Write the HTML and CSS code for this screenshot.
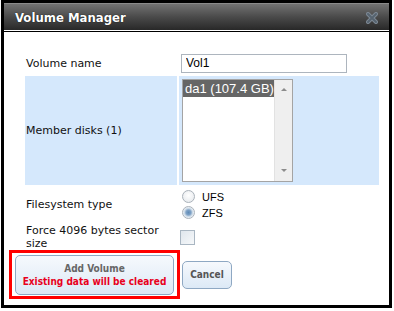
FILE: index.html
```html
<!DOCTYPE html>
<html lang="en">
<head>
    <meta charset="UTF-8">
    <meta name="viewport" content="width=device-width, initial-scale=1.0">
    <title>Volume Manager</title>
    <link rel="stylesheet" href="styles.css">
</head>
<body>

<div class="dialog">
    <div class="titlebar">
        <span class="title">Volume Manager</span>
        <svg class="close" width="12" height="12" viewBox="0 0 12 12">
            <path d="M2 2 L10 10 M10 2 L2 10" stroke="#7d8894" stroke-width="4" stroke-linecap="round"/>
            <path d="M2 2 L10 10 M10 2 L2 10" stroke="#56636f" stroke-width="2" stroke-linecap="round"/>
        </svg>
    </div>

    <div class="content">
        <div class="form-grid">
            <div class="label">Volume name</div>
            <div class="field">
                <input class="textbox" type="text" value="Vol1">
            </div>

            <div class="label hl">Member disks (1)</div>
            <div class="field hl top">
                <div class="listbox">
                    <div class="options">
                        <div class="option selected">da1 (107.4 GB)</div>
                    </div>
                    <div class="scrollbar">
                        <span class="arrow up"></span>
                        <span class="arrow down"></span>
                    </div>
                </div>
            </div>

            <div class="label">Filesystem type</div>
            <div class="field radios">
                <div class="radio-row"><span class="radio"></span>UFS</div>
                <div class="radio-row"><span class="radio checked"></span>ZFS</div>
            </div>

            <div class="label wrap">Force 4096 bytes sector size</div>
            <div class="field">
                <span class="checkbox"></span>
            </div>
        </div>

        <div class="actions">
            <div class="highlight">
                <button class="btn btn-add">Add Volume<span class="warn">Existing data will be cleared</span></button>
            </div>
            <button class="btn btn-cancel">Cancel</button>
        </div>
    </div>
</div>

</body>
</html>
```

FILE: styles.css
```css
body {
    margin: 0;
    padding: 0;
    background-color: #fff;
    font-family: "DejaVu Sans", Verdana, sans-serif;
}

.dialog {
    width: 385px;
    height: 302px;
    margin-left: 1px;
    border: 3px solid #000;
    background-color: #fff;
}

.titlebar {
    height: 26px;
    display: flex;
    align-items: center;
    justify-content: space-between;
    padding: 0 11px 0 11px;
    background: linear-gradient(#727272, #4a4a4a 50%, #282828);
    border-top: 1px solid #8a8a8a;
    border-bottom: 1px solid #fff;
}

.title {
    color: #fff;
    font-family: "DejaVu Sans Condensed", "DejaVu Sans", sans-serif;
    font-weight: bold;
    font-size: 13px;
    text-shadow: 0 0 1px #000;
    padding-top: 1px;
}

.close {
    display: block;
    margin-top: 1px;
}

.content {
    border-top: 1px solid #000;
    padding-top: 20px;
}

.form-grid {
    display: grid;
    grid-template-columns: 152px 200px;
    grid-template-rows: 22px 109px 35px 26px;
    gap: 2px;
    margin-left: 21px;
}

.label {
    display: flex;
    align-items: center;
    padding-left: 1px;
    font-size: 11px;
    color: #111;
}

.label.wrap {
    line-height: 13px;
}

.field {
    display: flex;
    align-items: center;
    padding-left: 1px;
}

.field.top {
    align-items: flex-start;
    padding: 3px 0 0 3px;
}

.hl {
    background-color: #d5e8fc;
}

.textbox {
    width: 166px;
    height: 19px;
    box-sizing: border-box;
    margin: 0 0 0 1px;
    padding: 0 4px;
    border: 1px solid #adb5be;
    font-family: "Liberation Sans", Arial, sans-serif;
    font-size: 12px;
    color: #000;
    outline: none;
}

.listbox {
    width: 111px;
    height: 103px;
    box-sizing: border-box;
    border: 1px solid #a4a4a4;
    background-color: #fff;
    display: flex;
}

.options {
    flex: 1;
}

.option {
    height: 17px;
    line-height: 17px;
    padding-left: 2px;
    font-family: "Liberation Sans", Arial, sans-serif;
    font-size: 13px;
    white-space: nowrap;
}

.option.selected {
    background-color: #666;
    color: #fff;
}

.scrollbar {
    width: 17px;
    background-color: #efefef;
    border-left: 1px solid #e2e2e2;
    display: flex;
    flex-direction: column;
    justify-content: space-between;
    align-items: center;
    padding: 8px 0 9px;
}

.arrow {
    width: 0;
    height: 0;
    border-left: 3px solid transparent;
    border-right: 3px solid transparent;
}

.arrow.up {
    border-bottom: 3px solid #8c8c8c;
}

.arrow.down {
    border-top: 3px solid #8c8c8c;
}

.radios {
    flex-direction: column;
    align-items: flex-start;
    justify-content: center;
    padding-left: 3px;
}

.radio-row {
    display: flex;
    align-items: center;
    gap: 7px;
    height: 16px;
    font-family: "Liberation Sans", Arial, sans-serif;
    font-size: 11px;
    color: #000;
}

.radio {
    width: 11px;
    height: 11px;
    border: 1px solid #aab2ba;
    border-radius: 50%;
    background: radial-gradient(circle at 50% 40%, #fff, #e2e6ea);
}

.radio.checked {
    background: radial-gradient(circle, #5f8ab6 0, #7fa2c6 2.5px, #c9d8e6 4px, #eef2f6 5.5px);
}

.checkbox {
    width: 13px;
    height: 13px;
    margin-top: 1px;
    border: 1px solid #a9b6c2;
    background: linear-gradient(135deg, #dfe6ed, #f6f8fa);
}

.actions {
    display: flex;
    align-items: center;
    gap: 2px;
    padding-left: 5px;
}

.highlight {
    border: 3px solid #f00;
    padding: 2px 3px 1px 3px;
}

.btn {
    display: flex;
    flex-direction: column;
    align-items: center;
    justify-content: center;
    padding: 0;
    border: 1px solid #8ea8c3;
    border-radius: 5px;
    background: linear-gradient(#f6f9fd, #dce9f6);
    font-family: "DejaVu Sans Condensed", "DejaVu Sans", sans-serif;
    font-weight: bold;
    font-size: 10px;
    line-height: 13px;
    color: #666;
    cursor: pointer;
}

.btn-add {
    width: 159px;
    height: 40px;
}

.btn-cancel {
    width: 50px;
    height: 28px;
    color: #555;
}

.warn {
    color: #e8001c;
}
```
